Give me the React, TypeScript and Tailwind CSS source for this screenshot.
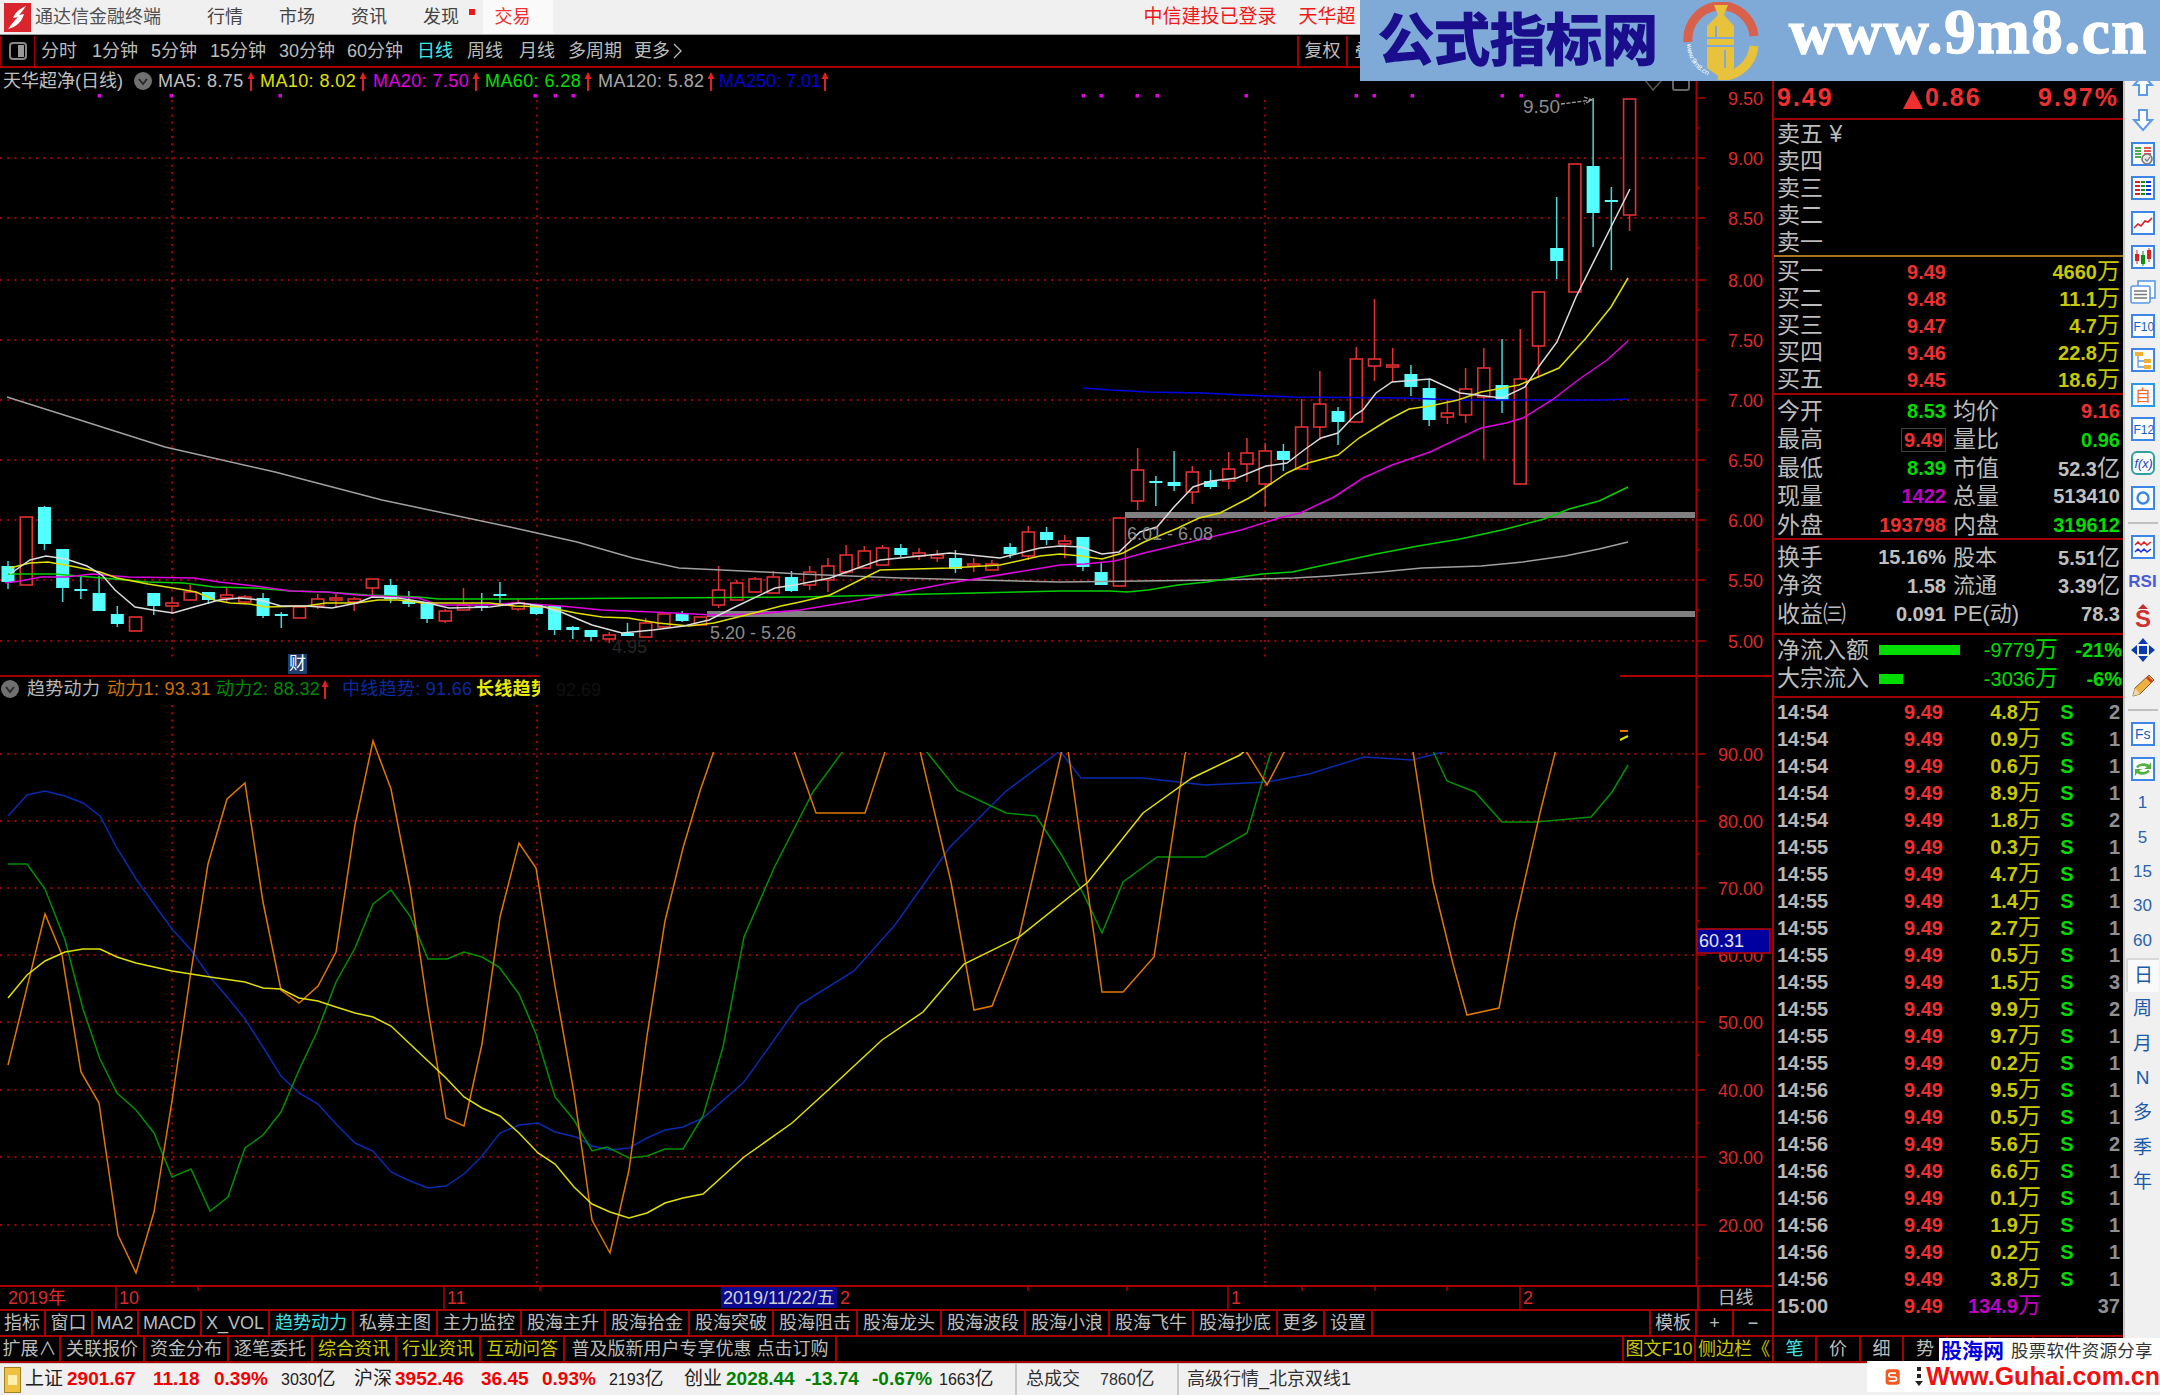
import type { ReactNode } from "react";

const X = (i: number) => 8 + 18.22 * i;

// c = cyan (down), r = red (up): [colour, high, bodyTop, bodyBottom, low]
const candles: [string, number, number, number, number][] = [
  ["c", 561, 566, 582, 589], ["r", 517, 517, 585, 585], ["c", 506, 507, 544, 550], ["c", 549, 549, 588, 602],
  ["c", 576, 589, 591, 599], ["c", 576, 593, 611, 611], ["c", 606, 614, 624, 627], ["r", 617, 617, 631, 631],
  ["c", 593, 593, 606, 615], ["r", 597, 603, 606, 614], ["r", 585, 592, 600, 600], ["c", 592, 592, 600, 604],
  ["r", 588, 595, 598, 603], ["r", 595, 597, 602, 603], ["c", 593, 598, 616, 618], ["c", 612, 614, 616, 628],
  ["r", 607, 607, 618, 618], ["r", 594, 599, 606, 609], ["r", 594, 598, 600, 608], ["r", 597, 599, 602, 611],
  ["r", 579, 579, 588, 595], ["c", 579, 585, 599, 603], ["c", 591, 600, 604, 607], ["c", 602, 602, 619, 623],
  ["r", 609, 611, 621, 623], ["r", 588, 605, 610, 610], ["c", 593, 606, 608, 611], ["c", 582, 594, 596, 606],
  ["r", 599, 603, 609, 611], ["c", 605, 605, 614, 615], ["c", 606, 606, 630, 635], ["c", 626, 627, 630, 639],
  ["c", 630, 630, 637, 641], ["r", 632, 635, 639, 643], ["c", 623, 633, 636, 636], ["r", 618, 623, 637, 637],
  ["r", 614, 614, 627, 627], ["c", 611, 613, 621, 622], ["r", 617, 617, 625, 625], ["r", 566, 590, 605, 608],
  ["r", 580, 583, 600, 600], ["r", 577, 579, 592, 592], ["r", 571, 577, 593, 593], ["c", 571, 577, 591, 592],
  ["r", 566, 572, 585, 590], ["r", 558, 566, 580, 592], ["r", 545, 555, 572, 574], ["r", 546, 551, 568, 568],
  ["r", 545, 548, 565, 565], ["c", 544, 548, 555, 557], ["r", 548, 553, 556, 560], ["r", 550, 555, 558, 562],
  ["c", 550, 558, 569, 573], ["r", 558, 564, 566, 572], ["r", 560, 564, 570, 570], ["c", 543, 547, 554, 558],
  ["r", 526, 532, 556, 560], ["c", 527, 532, 540, 545], ["r", 535, 541, 544, 558], ["c", 537, 537, 567, 571],
  ["c", 563, 572, 585, 585], ["r", 518, 518, 586, 586], ["r", 448, 470, 501, 510], ["c", 476, 481, 483, 506],
  ["c", 451, 482, 486, 491], ["r", 466, 472, 492, 504], ["c", 470, 481, 487, 489], ["r", 452, 469, 481, 489],
  ["r", 438, 453, 464, 482], ["r", 443, 451, 484, 507], ["c", 444, 451, 460, 471], ["r", 399, 427, 469, 469],
  ["r", 371, 404, 427, 440], ["c", 407, 411, 422, 445], ["r", 347, 359, 422, 422], ["r", 299, 359, 366, 381],
  ["r", 348, 365, 367, 382], ["c", 365, 374, 387, 396], ["c", 380, 388, 420, 426], ["r", 400, 413, 417, 424],
  ["r", 368, 389, 415, 423], ["r", 348, 368, 397, 459], ["c", 339, 385, 400, 413], ["r", 329, 379, 484, 484],
  ["r", 292, 292, 346, 378], ["c", 197, 248, 261, 279], ["r", 164, 164, 292, 292], ["c", 98, 166, 213, 247],
  ["c", 187, 200, 202, 270], ["r", 99, 99, 215, 231],
];

const ma5 = "10,574 30,560 46,556 66,559 87,566 102,575 115,590 135,607 153,610 173,613 194,607 219,600 240,598 260,600 281,606 306,606 332,608 357,603 372,597 398,598 423,602 449,608 490,607 520,603 541,606 561,612 592,625 622,633 653,630 684,626 709,620 735,607 775,588 800,584 830,578 880,560 950,553 1000,558 1040,548 1060,546 1081,547 1102,554 1119,552 1140,532 1157,527 1174,507 1193,487 1211,481 1237,478 1266,466 1287,463 1304,450 1321,438 1338,433 1355,415 1363,410 1376,393 1392,382 1430,379 1460,393 1502,398 1525,387 1540,365 1557,342 1576,297 1611,227 1630,189";
const ma10 = "10,568 30,563 48,562 76,567 100,572 117,578 148,584 179,589 196,592 214,600 230,603 250,604 265,607 306,606 326,603 357,603 378,600 398,600 423,603 459,603 490,603 515,606 546,607 576,613 602,617 628,618 658,623 689,626 714,623 750,614 781,606 800,602 830,595 880,570 950,568 1000,565 1040,556 1060,554 1081,556 1102,559 1123,553 1144,542 1178,528 1199,518 1220,513 1249,498 1266,487 1287,473 1308,463 1338,455 1359,438 1388,420 1409,409 1430,406 1458,400 1481,392 1519,385 1559,368 1586,338 1611,307 1628,278";
const ma20 = "5,583 20,581 41,577 66,577 92,574 128,577 194,578 219,582 255,586 291,591 326,592 357,595 418,598 439,605 485,605 515,603 561,606 602,610 653,612 714,615 755,614 800,610 860,600 950,583 1060,565 1085,564 1115,561 1144,553 1186,543 1211,537 1241,530 1279,518 1300,513 1334,497 1363,478 1392,465 1430,452 1481,428 1506,423 1523,418 1552,400 1578,380 1607,360 1628,341";
const ma60 = "8,574 54,574 102,578 148,582 184,583 214,587 255,588 291,591 326,592 367,595 418,597 439,599 510,599 800,597 1060,591 1110,591 1127,592 1148,590 1178,585 1207,582 1233,578 1262,574 1292,572 1334,563 1376,554 1418,546 1460,539 1502,530 1544,519 1569,509 1599,501 1628,487";
const ma120 = "7,397 83,421 165,447 275,472 382,500 510,527 577,542 633,558 679,568 765,572 800,574 900,578 1060,582 1220,580 1294,578 1329,576 1380,572 1422,568 1481,566 1523,562 1565,556 1599,549 1628,542";
const ma250 = "1083,388 1110,390 1148,392 1203,393 1241,395 1294,397 1403,398 1460,400 1603,400 1628,399";

const kOrange = "8,1065 45,914 62,955 81,1072 99,1103 118,1235 136,1273 154,1212 172,1101 190,978 208,864 227,799 245,783 263,902 281,990 299,1003 318,986 336,952 355,825 373,741 391,789 410,887 428,1009 446,1118 464,1126 482,1044 500,917 519,843 536,868 555,986 574,1093 592,1220 610,1253 629,1170 647,1036 665,921 683,848 700,791 716,745 770,700 792,745 816,813 865,813 884,755 900,700 920,751 951,882 974,1010 992,1006 1019,937 1062,750 1068,750 1102,992 1123,992 1154,957 1185,755 1200,700 1246,751 1267,785 1288,745 1330,700 1412,745 1433,882 1453,964 1467,1015 1499,1008 1515,923 1540,813 1557,745 1600,700";
const kGreen = "8,864 27,864 45,889 65,940 83,1009 100,1059 117,1093 136,1110 154,1133 172,1177 191,1169 210,1211 228,1197 245,1148 263,1135 281,1112 299,1070 317,1032 336,982 355,948 373,904 391,890 410,916 428,959 447,959 464,952 482,957 499,967 519,994 536,1034 555,1097 574,1120 592,1151 607,1147 629,1158 647,1156 665,1149 683,1149 703,1116 723,1047 744,937 774,868 813,792 843,751 900,700 926,751 957,790 1006,813 1036,816 1061,854 1084,895 1102,933 1123,882 1157,857 1205,857 1247,833 1270,755 1300,700 1433,751 1447,781 1475,792 1502,822 1536,822 1591,817 1612,792 1628,765";
const kBlue = "8,816 27,795 45,791 65,796 83,803 100,816 117,848 136,879 154,904 172,929 191,950 210,977 228,998 245,1019 263,1047 281,1076 299,1093 318,1104 336,1124 355,1143 373,1151 391,1172 410,1181 428,1188 446,1186 464,1174 482,1156 500,1133 519,1125 538,1123 555,1132 576,1137 592,1146 610,1150 629,1148 647,1138 665,1130 683,1127 703,1118 744,1082 799,1005 854,971 895,925 950,847 1005,792 1060,751 1081,778 1143,778 1205,785 1267,782 1309,774 1364,757 1412,760 1447,751";
const kYellow = "8,998 27,975 45,961 65,952 83,949 100,949 117,957 136,963 172,971 210,977 245,982 263,988 281,989 299,998 318,1001 336,1007 355,1013 373,1017 391,1026 410,1044 428,1061 446,1078 464,1097 482,1108 500,1116 519,1133 538,1153 555,1164 574,1187 592,1204 610,1212 629,1218 647,1213 665,1203 683,1198 703,1194 744,1157 792,1123 826,1092 882,1040 923,1012 964,964 1019,937 1088,882 1143,813 1192,778 1240,755 1300,700";

const priceTicks = [98, 158, 218, 280, 340, 400, 460, 520, 580, 641];
const priceLabels = ["9.50", "9.00", "8.50", "8.00", "7.50", "7.00", "6.50", "6.00", "5.50", "5.00"];
const magentaDots = [99, 171, 280, 535, 555, 573, 1083, 1101, 1137, 1157, 1246, 1356, 1374, 1412, 1502, 1521, 1557];
const kdTicks = [754, 821, 888, 955, 1022, 1090, 1157, 1225];
const kdLabels = ["90.00", "80.00", "70.00", "60.00", "50.00", "40.00", "30.00", "20.00"];

const UpArrow = () => (
  <svg width="8" height="19" viewBox="0 0 8 19" className="shrink-0">
    <path d="M4 0 L7.5 7 H5 V19 H3 V7 H0.5 Z" fill="#e02020" />
  </svg>
);

const DownCircle = () => (
  <svg width="18" height="18" viewBox="0 0 18 18" className="shrink-0">
    <circle cx="9" cy="9" r="9" fill="#707070" />
    <path d="M5 7 L9 12 L13 7" fill="none" stroke="#2a2a2a" strokeWidth="2" />
  </svg>
);

const PriceChart = () => (
  <div className="relative h-[609px]">
    <svg width="1772" height="609" viewBox="0 68 1772 609" className="block">
      {priceTicks.slice(1).map((y) => (
        <line key={y} x1="0" x2="1695" y1={y} y2={y} stroke="#a00000" strokeWidth="2" strokeDasharray="2 5.2" />
      ))}
      {[172, 537, 1265].map((x) => (
        <line key={x} x1={x} x2={x} y1="100" y2="660" stroke="#a00000" strokeWidth="2" strokeDasharray="2 5.2" />
      ))}
      {magentaDots.map((x) => (
        <rect key={x} x={x - 1.5} y="94" width="3.5" height="3.5" fill="#e000e0" />
      ))}
      <rect x="1125" y="512" width="570" height="6" fill="#808080" />
      <rect x="707" y="611" width="988" height="6" fill="#808080" />
      {candles.map(([c, hi, top, bot, lo], i) => {
        const cx = X(i);
        const col = c === "r" ? "#e43030" : "#45d8d8";
        return (
          <g key={i}>
            <line x1={cx} x2={cx} y1={hi} y2={lo} stroke={col} strokeWidth="1.5" />
            {c === "r" ? (
              <rect x={cx - 6} y={top} width="12" height={bot - top} fill="#000" stroke={col} strokeWidth="1.6" />
            ) : (
              <rect x={cx - 6.5} y={top} width="13" height={bot - top} fill="#54ffff" />
            )}
          </g>
        );
      })}
      <polyline points={ma120} fill="none" stroke="#a0a0a0" strokeWidth="1.5" />
      <polyline points={ma250} fill="none" stroke="#0000e0" strokeWidth="1.6" />
      <polyline points={ma60} fill="none" stroke="#00d000" strokeWidth="1.5" />
      <polyline points={ma20} fill="none" stroke="#e000e0" strokeWidth="1.5" />
      <polyline points={ma10} fill="none" stroke="#e0e000" strokeWidth="1.5" />
      <polyline points={ma5} fill="none" stroke="#dcdcdc" strokeWidth="1.5" />
      <text x="1127" y="540" fontSize="18" fill="#8c8c8c">6.01 - 6.08</text>
      <text x="710" y="639" fontSize="18" fill="#8c8c8c">5.20 - 5.26</text>
      <text x="612" y="653" fontSize="18" fill="#262626">4.95</text>
      <text x="1523" y="113" fontSize="19" fill="#8c8c8c">9.50</text>
      <path d="M1561 104 L1592 100 M1584 97 L1592 100 L1584 104" fill="none" stroke="#a0a0a0" strokeWidth="1.3" strokeDasharray="4 1.5" />
      <path d="M1645 80 L1653 90 L1662 80" fill="none" stroke="#555" strokeWidth="1.5" />
      <rect x="1673" y="76" width="16" height="14" rx="2" fill="none" stroke="#666" strokeWidth="2" />
      {/* price axis */}
      <line x1="1696.5" x2="1696.5" y1="68" y2="677" stroke="#a80000" strokeWidth="2" />
      {priceTicks.map((y, i) => (
        <g key={y}>
          <line x1="1696" x2="1705" y1={y} y2={y} stroke="#a80000" strokeWidth="1.5" />
          {i < 9 && <line x1="1696" x2="1700" y1={y + 30} y2={y + 30} stroke="#a80000" strokeWidth="1.5" />}
          <text x="1763" y={y + 7} fontSize="18" textAnchor="end" fill="#dc2a2a">{priceLabels[i]}</text>
        </g>
      ))}
      <line x1="0" x2="540" y1="676" y2="676" stroke="#a00000" strokeWidth="2" />
      <line x1="1620" x2="1772" y1="676" y2="676" stroke="#a80000" strokeWidth="2" />
    </svg>
    {/* legend sits over the chart */}
    <div className="absolute left-0 top-[1px] flex h-[24px] items-center text-[18px] tracking-[0.4px] whitespace-nowrap text-[#c0c0c0]">
      <span className="w-[134px] pl-[3px] tracking-normal">天华超净(日线)</span>
      <span className="w-[24px]"><DownCircle /></span>
      <span className="flex w-[102px] items-center gap-[3px]">MA5: 8.75<UpArrow /></span>
      <span className="flex w-[113px] items-center gap-[3px] text-[#e0e000]">MA10: 8.02<UpArrow /></span>
      <span className="flex w-[112px] items-center gap-[3px] text-[#e000e0]">MA20: 7.50<UpArrow /></span>
      <span className="flex w-[113px] items-center gap-[3px] text-[#00e000]">MA60: 6.28<UpArrow /></span>
      <span className="flex w-[121px] items-center gap-[3px] text-[#a8a8a8]">MA120: 5.82<UpArrow /></span>
      <span className="flex items-center text-[#0000d8] tracking-normal">MA250: 7.01<UpArrow /></span>
    </div>
    <div className="absolute left-[288px] top-[586px] flex h-[20px] w-[19px] items-center justify-center bg-[#1a3f70] text-[17px] text-white">财</div>
  </div>
);

const IndicatorChart = () => (
  <div className="relative h-[608px]">
    <svg width="1772" height="608" viewBox="0 677 1772 608" className="block">
      {kdTicks.map((y) => (
        <line key={y} x1="0" x2="1695" y1={y} y2={y} stroke="#a00000" strokeWidth="2" strokeDasharray="2 5.2" />
      ))}
      {[172, 537, 1265].map((x) => (
        <line key={x} x1={x} x2={x} y1="705" y2="1285" stroke="#a00000" strokeWidth="2" strokeDasharray="2 5.2" />
      ))}
      <polyline points={kBlue} fill="none" stroke="#0a2ab0" strokeWidth="1.5" />
      <polyline points={kGreen} fill="none" stroke="#009000" strokeWidth="1.5" />
      <polyline points={kOrange} fill="none" stroke="#e07800" strokeWidth="1.5" />
      <polyline points={kYellow} fill="none" stroke="#e0e000" strokeWidth="1.5" />
      <rect x="540" y="677" width="1080" height="75" fill="#000" />
      <path d="M1620 731 H1628" stroke="#e07800" strokeWidth="2" />
      <path d="M1620 740 L1628 736" stroke="#e0e000" strokeWidth="2" />
      <line x1="1696.5" x2="1696.5" y1="677" y2="1285" stroke="#a80000" strokeWidth="2" />
      {kdTicks.map((y, i) => (
        <g key={y}>
          <line x1="1696" x2="1705" y1={y} y2={y} stroke="#a80000" strokeWidth="1.5" />
          <line x1="1696" x2="1700" y1={y + 33} y2={y + 33} stroke="#a80000" strokeWidth="1.5" />
          <text x="1763" y={y + 7} fontSize="18" textAnchor="end" fill="#dc2a2a">{kdLabels[i]}</text>
        </g>
      ))}
      <rect x="1697" y="929" width="73" height="24" fill="#0000a0" stroke="#c00000" strokeWidth="1.5" />
      <text x="1699" y="947" fontSize="18" fill="#e8e8e8">60.31</text>
    </svg>
    <div className="absolute left-0 top-0 flex h-[24px] w-[540px] items-center overflow-hidden text-[18px] whitespace-nowrap tracking-[0.3px]">
      <span className="w-[27px] shrink-0 pl-[1px]"><DownCircle /></span>
      <span className="w-[80px] shrink-0 text-[#b8b8b8]">趋势动力</span>
      <span className="w-[109px] shrink-0 text-[#d07000]">动力1: 93.31</span>
      <span className="flex w-[126px] shrink-0 items-center gap-[1px] text-[#008a00]">动力2: 88.32<UpArrow /></span>
      <span className="w-[134px] shrink-0 text-[#0a2aa0]">中线趋势: 91.66</span>
      <span className="shrink-0 font-bold text-[#e8e800]">长线趋势</span>
    </div>
    <span className="absolute left-[556px] top-0 text-[18px] text-[#101010]">92.69</span>
  </div>
);

const DateRow = () => (
  <div className="flex h-[24px] border-t-2 border-[#a80000]">
    <svg width="1697" height="22" viewBox="0 1287 1697 22" className="block">
      {[116, 444, 1228, 1520].map((x) => (
        <line key={x} x1={x} x2={x} y1="1287" y2="1309" stroke="#a80000" strokeWidth="1.5" />
      ))}
      {[198, 540, 1028, 1127, 1302, 1375, 1447].map((x) => (
        <line key={x} x1={x} x2={x} y1="1287" y2="1291" stroke="#a80000" strokeWidth="1.5" />
      ))}
      <text x="8" y="1304" fontSize="18" fill="#dc2a2a">2019年</text>
      <text x="119" y="1304" fontSize="18" fill="#dc2a2a">10</text>
      <text x="447" y="1304" fontSize="18" fill="#dc2a2a">11</text>
      <rect x="721" y="1287" width="116" height="21" fill="#0a0a90" />
      <text x="723" y="1304" fontSize="18" fill="#d0d0d0">2019/11/22/五</text>
      <text x="840" y="1304" fontSize="18" fill="#dc2a2a">2</text>
      <text x="1231" y="1304" fontSize="18" fill="#dc2a2a">1</text>
      <text x="1523" y="1304" fontSize="18" fill="#dc2a2a">2</text>
    </svg>
    <div className="flex w-[75px] items-center justify-center border-l-2 border-[#a80000] text-[18px] text-[#b8b8b8]">日线</div>
  </div>
);

const Cell = ({ w, children, color = "text-[#bcbcbc]" }: { w: string; children: ReactNode; color?: string }) => (
  <div className={`flex shrink-0 items-center justify-center border-r-2 border-[#a80000] whitespace-nowrap ${w} ${color}`}>{children}</div>
);

const tabs1: [string, string, string?][] = [
  ["指标", "w-[46px]"], ["窗口", "w-[47px]"], ["MA2", "w-[46px]"], ["MACD", "w-[63px]"], ["X_VOL", "w-[68px]"],
  ["趋势动力", "w-[84px]", "text-[#40e0e0]"], ["私募主图", "w-[84px]"], ["主力监控", "w-[84px]"], ["股海主升", "w-[84px]"],
  ["股海拾金", "w-[84px]"], ["股海突破", "w-[84px]"], ["股海阻击", "w-[84px]"], ["股海龙头", "w-[84px]"],
  ["股海波段", "w-[84px]"], ["股海小浪", "w-[84px]"], ["股海飞牛", "w-[84px]"], ["股海抄底", "w-[84px]"],
  ["更多", "w-[47px]"], ["设置", "w-[48px]"],
];
const tabs2: [string, string, string?][] = [
  ["扩展∧", "w-[61px]"], ["关联报价", "w-[84px]"], ["资金分布", "w-[84px]"], ["逐笔委托", "w-[84px]"],
  ["综合资讯", "w-[84px]", "text-[#c8c800]"], ["行业资讯", "w-[84px]", "text-[#c8c800]"], ["互动问答", "w-[84px]", "text-[#c8c800]"],
  ["普及版新用户专享优惠 点击订购", "w-[272px]"],
];

const Tabs = () => (
  <>
    <div className="flex h-[26px] border-t-2 border-[#a80000] text-[18px]">
      {tabs1.map(([t, w, c]) => (
        <Cell key={t} w={w} color={c}>{t}</Cell>
      ))}
      <div className="flex-1 border-r-2 border-[#a80000]" />
      <Cell w="w-[46px]">模板</Cell>
      <Cell w="w-[37px]">+</Cell>
      <div className="flex w-[38px] items-center justify-center text-[#bcbcbc]">−</div>
    </div>
    <div className="flex h-[28px] border-t-2 border-b-2 border-[#a80000] text-[18px]">
      {tabs2.map(([t, w, c]) => (
        <Cell key={t} w={w} color={c}>{t}</Cell>
      ))}
      <div className="flex-1 border-r-2 border-[#a80000]" />
      <Cell w="w-[72px]" color="text-[#c8c800]">图文F10</Cell>
      <div className="flex w-[76px] items-center justify-center whitespace-nowrap text-[#c8c800]">侧边栏《</div>
    </div>
  </>
);

const RED = "text-[#f03030]";
const GREEN = "text-[#00dc00]";
const GRAY = "text-[#c0c0c0]";
const YEL = "text-[#c8c800]";

const sellRows = ["卖五 ¥", "卖四", "卖三", "卖二", "卖一"];
const buyRows: [string, string, string][] = [
  ["买一", "9.49", "4660"], ["买二", "9.48", "11.1"], ["买三", "9.47", "4.7"], ["买四", "9.46", "22.8"], ["买五", "9.45", "18.6"],
];
const statRows: [string, string, string, string, string, string][] = [
  ["今开", "8.53", GREEN, "均价", "9.16", RED],
  ["最高", "9.49", RED, "量比", "0.96", GREEN],
  ["最低", "8.39", GREEN, "市值", "52.3亿", GRAY],
  ["现量", "1422", "text-[#c000c0]", "总量", "513410", GRAY],
  ["外盘", "193798", RED, "内盘", "319612", GREEN],
];
const capRows: [string, string, string, string][] = [
  ["换手", "15.16%", "股本", "5.51亿"],
  ["净资", "1.58", "流通", "3.39亿"],
  ["收益㈢", "0.091", "PE(动)", "78.3"],
];
const ticks: [string, string, string][] = [
  ["14:54", "4.8", "2"], ["14:54", "0.9", "1"], ["14:54", "0.6", "1"], ["14:54", "8.9", "1"], ["14:54", "1.8", "2"],
  ["14:55", "0.3", "1"], ["14:55", "4.7", "1"], ["14:55", "1.4", "1"], ["14:55", "2.7", "1"], ["14:55", "0.5", "1"],
  ["14:55", "1.5", "3"], ["14:55", "9.9", "2"], ["14:55", "9.7", "1"], ["14:55", "0.2", "1"], ["14:56", "9.5", "1"],
  ["14:56", "0.5", "1"], ["14:56", "5.6", "2"], ["14:56", "6.6", "1"], ["14:56", "0.1", "1"], ["14:56", "1.9", "1"],
  ["14:56", "0.2", "1"], ["14:56", "3.8", "1"],
];

const Wan = () => <span className="text-[23px] font-normal leading-none">万</span>;

const QuotePanel = () => (
  <div className="flex w-[351px] flex-col border-l-2 border-[#a80000]">
    <div className="flex h-[52px] shrink-0 items-end border-b-2 border-[#a00000] pb-[8px] pl-[3px] text-[25px] font-bold leading-none tracking-[2px] text-[#f03030]">
      <span className="w-[126px]">9.49</span>
      <svg width="20" height="19" viewBox="0 0 20 19" className="mb-[1px] mr-[2px]"><path d="M10 0 L20 19 H0 Z" fill="#f03030" /></svg>
      <span className="w-[113px]">0.86</span>
      <span>9.97%</span>
    </div>
    <div className="h-[135px] shrink-0 pl-[3px] pt-[1px] text-[23px] text-[#bcbcbc]">
      {sellRows.map((s) => (
        <div key={s} className="flex h-[27px] items-center whitespace-pre">{s}</div>
      ))}
    </div>
    <div className="h-[2px] shrink-0 bg-[#a87818]" />
    <div className="h-[138px] shrink-0 border-b-2 border-[#a00000] pl-[3px] pt-[1px]">
      {buyRows.map(([l, p, v]) => (
        <div key={l} className="flex h-[27px] items-center">
          <span className="w-[60px] text-[23px] text-[#bcbcbc]">{l}</span>
          <span className={`w-[109px] text-right text-[20px] font-bold ${RED}`}>{p}</span>
          <span className={`flex-1 pr-[3px] text-right text-[20px] font-bold ${YEL}`}>{v}<Wan /></span>
        </div>
      ))}
    </div>
    <div className="h-[145px] shrink-0 border-b-2 border-[#a00000] pl-[3px] pt-[2px]">
      {statRows.map(([l, v, c, l2, v2, c2]) => (
        <div key={l} className="flex h-[28.4px] items-center">
          <span className="w-[60px] text-[23px] text-[#bcbcbc]">{l}</span>
          <span className={`w-[109px] text-right text-[20px] font-bold ${c}`}>
            {l === "最高" ? <span className="border border-[#404040] px-[2px]">{v}</span> : v}
          </span>
          <span className="ml-[7px] w-[60px] text-[23px] text-[#bcbcbc]">{l2}</span>
          <span className={`flex-1 pr-[3px] text-right text-[20px] font-bold ${c2}`}>
            {v2.endsWith("亿") ? <>{v2.slice(0, -1)}<span className="text-[23px] font-normal">亿</span></> : v2}
          </span>
        </div>
      ))}
    </div>
    <div className="h-[95px] shrink-0 border-b-2 border-[#a00000] pl-[3px] pt-[3px]">
      {capRows.map(([l, v, l2, v2]) => (
        <div key={l} className="flex h-[28.4px] items-center">
          <span className="w-[60px] whitespace-nowrap text-[23px] text-[#bcbcbc]">{l}</span>
          <span className={`w-[109px] text-right text-[20px] font-bold ${GRAY}`}>{v}</span>
          <span className="ml-[7px] w-[60px] whitespace-nowrap text-[22px] text-[#bcbcbc]">{l2}</span>
          <span className={`flex-1 pr-[3px] text-right text-[20px] font-bold ${GRAY}`}>
            {v2.endsWith("亿") ? <>{v2.slice(0, -1)}<span className="text-[23px] font-normal">亿</span></> : v2}
          </span>
        </div>
      ))}
    </div>
    <div className="h-[63px] shrink-0 border-b-2 border-[#a00000] pl-[3px] pt-[1px]">
      {[
        ["净流入额", "w-[81px]", "-9779", "-21%"],
        ["大宗流入", "w-[24px]", "-3036", "-6%"],
      ].map(([l, bar, v, p]) => (
        <div key={l} className="flex h-[28.4px] items-center whitespace-nowrap">
          <span className="w-[102px] text-[23px] text-[#bcbcbc]">{l}</span>
          <span className="w-[90px]"><span className={`block h-[10px] bg-[#00dc00] ${bar}`} /></span>
          <span className={`w-[89px] text-right text-[20px] ${GREEN}`}>{v}<Wan /></span>
          <span className={`flex-1 pr-[1px] text-right text-[20px] font-bold ${GREEN}`}>{p}</span>
        </div>
      ))}
    </div>
    <div className="flex-1 pl-[3px] text-[20px] font-bold">
      {ticks.map(([t, v, n], i) => (
        <div key={i} className="flex h-[27px] items-center">
          <span className="w-[110px] text-[#b8b8b8]">{t}</span>
          <span className={`w-[56px] text-right ${RED}`}>9.49</span>
          <span className={`w-[98px] text-right ${YEL}`}>{v}<Wan /></span>
          <span className={`w-[52px] text-center ${GREEN}`}>S</span>
          <span className="w-[27px] text-right text-[#909090]">{n}</span>
        </div>
      ))}
      <div className="flex h-[27px] items-center">
        <span className="w-[110px] text-[#b8b8b8]">15:00</span>
        <span className={`w-[56px] text-right ${RED}`}>9.49</span>
        <span className="w-[98px] text-right text-[#c000c0]">134.9<Wan /></span>
        <span className="w-[52px]" />
        <span className="w-[27px] text-right text-[#909090]">37</span>
      </div>
    </div>
    <div className="flex h-[28px] shrink-0 border-t-2 border-b-2 border-[#a80000] text-[18px] text-[#bcbcbc]">
      <Cell w="w-[43px]" color="text-[#40e0e0]">笔</Cell>
      <Cell w="w-[44px]">价</Cell>
      <Cell w="w-[43px]">细</Cell>
      <Cell w="w-[44px]">势</Cell>
      <Cell w="w-[43px]">联</Cell>
      <Cell w="w-[43px]">值</Cell>
      <Cell w="w-[44px]">主</Cell>
      <div className="flex flex-1 items-center justify-center">筹</div>
    </div>
  </div>
);

const Box = ({ children, stroke = "#3b86e6", rx = 0 }: { children?: ReactNode; stroke?: string; rx?: number }) => (
  <svg width="24" height="24" viewBox="0 0 24 24">
    <rect x="1" y="1" width="22" height="22" rx={rx} fill="#fbfdff" stroke={stroke} strokeWidth="2" />
    {children}
  </svg>
);

const sideIcons: ReactNode[] = [
  <svg width="24" height="24" viewBox="0 0 24 24"><path d="M12 2 L21 12 H16 V22 H8 V12 H3 Z" fill="#fff" stroke="#5a9ae8" strokeWidth="2" /></svg>,
  <svg width="24" height="24" viewBox="0 0 24 24"><path d="M12 22 L21 12 H16 V2 H8 V12 H3 Z" fill="#fff" stroke="#5a9ae8" strokeWidth="2" /></svg>,
  <Box>
    <path d="M4 6 H10 M4 9 H10 M4 12 H10 M4 15 H10" stroke="#109010" strokeWidth="1.6" />
    <path d="M13 6 H20 M13 9 H20 M13 12 H20" stroke="#e02020" strokeWidth="1.6" />
    <circle cx="16" cy="17" r="5" fill="#e8e8e8" stroke="#777" strokeWidth="1.6" />
    <path d="M14 17 L16 19 L19 15" fill="none" stroke="#777" strokeWidth="1.2" />
  </Box>,
  <Box>
    <path d="M4 6 H9 M4 10 H9 M4 14 H9 M4 18 H9" stroke="#e02020" strokeWidth="1.8" />
    <path d="M10 6 H14 M10 10 H14 M10 14 H14 M10 18 H14" stroke="#109010" strokeWidth="1.8" />
    <path d="M15 6 H20 M15 10 H20 M15 14 H20 M15 18 H20" stroke="#1030e0" strokeWidth="1.8" />
  </Box>,
  <Box><path d="M3 17 L7 13 L10 15 L14 10 L17 11 L21 7" fill="none" stroke="#e02020" strokeWidth="1.6" /></Box>,
  <Box>
    <path d="M6 5 V19" stroke="#e02020" strokeWidth="1" />
    <rect x="4" y="9" width="4" height="7" fill="#e02020" />
    <path d="M12 6 V21" stroke="#109010" strokeWidth="1" />
    <rect x="10" y="10" width="4" height="9" fill="#109010" />
    <path d="M18 3 V17" stroke="#e02020" strokeWidth="1" />
    <rect x="16" y="5" width="4" height="9" fill="#e02020" />
  </Box>,
  <svg width="26" height="24" viewBox="0 0 26 24">
    <rect x="8" y="1" width="17" height="17" fill="#fff" stroke="#5a9ae8" strokeWidth="1.6" />
    <rect x="1" y="6" width="19" height="17" rx="2" fill="#fff" stroke="#5a9ae8" strokeWidth="1.6" />
    <path d="M4 11 H17 M4 14.5 H17 M4 18 H17" stroke="#777" strokeWidth="1.6" />
  </svg>,
  <Box><text x="2.5" y="17" fontSize="12" fill="#1a5fc0">F10</text></Box>,
  <Box>
    <rect x="4" y="4" width="8" height="4" fill="#f0b030" />
    <rect x="13" y="11" width="7" height="4" fill="#f0b030" />
    <rect x="13" y="17" width="7" height="4" fill="#f0b030" />
    <path d="M7 8 V19 H13 M7 13 H13" fill="none" stroke="#5a9ae8" strokeWidth="1.3" />
  </Box>,
  <Box stroke="#2a9ae8"><text x="4" y="18" fontSize="16" fill="#f07020">自</text></Box>,
  <Box><text x="2.5" y="17" fontSize="12" fill="#1a5fc0">F12</text></Box>,
  <Box stroke="#30a0a0" rx={5}><text x="3.5" y="17" fontSize="12.5" fontStyle="italic" fill="#1a40c0">f(x)</text></Box>,
  <Box><circle cx="12" cy="12" r="5.5" fill="none" stroke="#3b86e6" strokeWidth="2.4" /></Box>,
];
const sideIcons2: ReactNode[] = [
  <Box>
    <path d="M4 10 L7 7 L10 10 L13 7 L16 10 L20 7" fill="none" stroke="#e02020" strokeWidth="1.5" />
    <path d="M4 17 L7 14 L10 17 L13 14 L16 17 L20 14" fill="none" stroke="#2030e0" strokeWidth="1.5" />
  </Box>,
  <span className="text-[17px] font-bold text-[#4a5ad8]">RSI</span>,
  <svg width="24" height="26" viewBox="0 0 24 26">
    <path d="M12 1 L17 6 H7 Z" fill="#c03030" />
    <text x="12" y="24" fontSize="24" fontWeight="bold" textAnchor="middle" fill="#d03030">S</text>
  </svg>,
  <svg width="26" height="26" viewBox="0 0 26 26" fill="#0a3ab0">
    <path d="M13 1 L18 7 H8 Z M13 25 L18 19 H8 Z M1 13 L7 8 V18 Z M25 13 L19 8 V18 Z" />
    <rect x="9" y="9" width="8" height="8" />
  </svg>,
  <svg width="26" height="26" viewBox="0 0 26 26">
    <path d="M3 24 L5 16 L19 3 L24 8 L10 22 Z" fill="#f0b040" stroke="#806020" strokeWidth="1" />
    <path d="M3 24 L5 16 L10 22 Z" fill="#e8d8b0" />
    <path d="M17 5 L22 10" stroke="#d04030" strokeWidth="3" />
  </svg>,
];
const sideText = ["1", "5", "15", "30", "60"];
const sideCjk = ["周", "月", "N", "多", "季", "年"];

const Sidebar = () => (
  <div className="flex w-[37px] flex-col items-center border-l-2 border-[#c8c8c8] bg-[#f0f0f0] pt-[33px]">
    {sideIcons.map((ic, i) => (
      <div key={i} className="flex h-[34.4px] items-center justify-center">{ic}</div>
    ))}
    <div className="flex h-[15px] w-[30px] items-center"><div className="h-[2px] w-full bg-[#c0c0c0]" /></div>
    {sideIcons2.map((ic, i) => (
      <div key={i} className="flex h-[34.4px] items-center justify-center">{ic}</div>
    ))}
    <div className="flex h-[15px] w-[30px] items-center"><div className="h-[2px] w-full bg-[#c0c0c0]" /></div>
    <div className="flex h-[34.4px] items-center">
      <Box><text x="4" y="17" fontSize="14" fill="#1a5fc0">Fs</text></Box>
    </div>
    <div className="flex h-[34.4px] items-center">
      <Box><path d="M5 10 A8 6 0 0 1 18 8 L20 5 V12 H13 L16 10 A6 4 0 0 0 7 11 Z M19 14 A8 6 0 0 1 6 16 L4 19 V12 H11 L8 14 A6 4 0 0 0 17 13 Z" fill="#50b040" /></Box>
    </div>
    {sideText.map((t) => (
      <div key={t} className="flex h-[34.4px] items-center text-[17px] text-[#2a62a8]">{t}</div>
    ))}
    <div className="flex h-[34.4px] w-[33px] items-center justify-center border-t-2 border-l-2 border-[#d8d8d8] bg-[#fafafa] text-[19px] text-[#1a5aa8]">日</div>
    {sideCjk.map((t) => (
      <div key={t} className="flex h-[34.6px] items-center text-[19px] text-[#1a5aa8]">{t}</div>
    ))}
  </div>
);

const Toolbar = () => {
  const items: [string, string, string?][] = [
    ["分时", "w-[51px]"], ["1分钟", "w-[59px]"], ["5分钟", "w-[59px]"], ["15分钟", "w-[69px]"], ["30分钟", "w-[68px]"],
    ["60分钟", "w-[70px]"], ["日线", "w-[50px]", "text-[#40e8e8]"], ["周线", "w-[52px]"], ["月线", "w-[49px]"], ["多周期", "w-[66px]"],
  ];
  return (
    <div className="flex h-[33px] shrink-0 items-center border-b-2 border-[#a80000] pt-[1px] text-[18px] text-[#bcbcbc]">
      <div className="flex h-full w-[35px] items-center justify-center border-x border-[#a00000]">
        <svg width="18" height="18" viewBox="0 0 18 18">
          <rect x="1" y="1" width="16" height="16" rx="3" fill="none" stroke="#888" strokeWidth="2" />
          <rect x="9" y="3" width="6" height="12" fill="#999" />
        </svg>
      </div>
      <div className="flex pl-[6px]">
        {items.map(([t, w, c]) => (
          <span key={t} className={`whitespace-nowrap ${w} ${c ?? ""}`}>{t}</span>
        ))}
        <span className="flex items-center gap-[3px]">
          更多
          <svg width="9" height="16" viewBox="0 0 9 16"><path d="M1 1 L8 8 L1 15" fill="none" stroke="#bcbcbc" strokeWidth="1.3" /></svg>
        </span>
      </div>
      <div className="ml-[615px] flex h-full w-[51px] items-center justify-center border-x-2 border-[#a00000]">复权</div>
      <div className="flex h-full w-[51px] items-center justify-center border-r-2 border-[#a00000]">叠加</div>
    </div>
  );
};

const TitleBar = () => (
  <div className="flex h-[35px] shrink-0 items-center border-b border-[#a0a0a0] bg-[#f0f0f0] text-[18px] text-[#444]">
    <svg width="27" height="29" viewBox="0 0 27 29" className="ml-[4px]">
      <rect width="27" height="29" fill="#d8262c" />
      <path d="M22 3 C15 6 11 10 9 15 L14 14 C10 18 7 22 4 26 C12 24 18 19 20 11 L15 12 C18 9 20 6 22 3 Z" fill="#fff" />
    </svg>
    <span className="ml-[4px] w-[172px] text-[#505050]">通达信金融终端</span>
    <span className="w-[72px]">行情</span>
    <span className="w-[72px]">市场</span>
    <span className="w-[72px]">资讯</span>
    <span className="w-[46px]">发现</span>
    <span className="mb-[10px] h-[6px] w-[6px] bg-[#e81818]" />
    <span className="ml-[7.5px] flex h-full w-[70px] items-center bg-[#fafafa] pl-[12px] text-[#f03030]">交易</span>
    <span className="ml-[591px] w-[155px] text-[19px] text-[#f01818]">中信建投已登录</span>
    <span className="text-[19px] text-[#f01818]">天华超</span>
  </div>
);

const statusItems: [string, string, string?][] = [
  ["2901.67", "w-[86px]", "r"], ["11.18", "w-[61px]", "r"], ["0.39%", "w-[67px]", "r"], ["3030", "w-[73px]"],
];
const statusItems2: [string, string, string?][] = [
  ["3952.46", "w-[86px]", "r"], ["36.45", "w-[61px]", "r"], ["0.93%", "w-[67px]", "r"], ["2193", "w-[75px]"],
];
const statusItems3: [string, string, string?][] = [
  ["2028.44", "w-[79px]", "g"], ["-13.74", "w-[67px]", "g"], ["-0.67%", "w-[67px]", "g"], ["1663", "w-[76px]"],
];

const StatusGroup = ({ name, w, items }: { name: string; w: string; items: [string, string, string?][] }) => (
  <>
    <span className={`text-[19px] text-[#202020] ${w}`}>{name}</span>
    {items.map(([t, iw, c]) => (
      <span
        key={t}
        className={`${iw} ${c === "r" ? "text-[19px] font-bold text-[#f00000]" : c === "g" ? "text-[19px] font-bold text-[#008000]" : "text-[16px] text-[#202020]"}`}
      >
        {t}
        {!c && <span className="text-[19px]">亿</span>}
      </span>
    ))}
  </>
);

const StatusBar = () => (
  <div className="flex h-[32px] items-center border-t border-[#d0d0d0] bg-[#f0f0f0] whitespace-nowrap">
    <span className="ml-[4px] mr-[4px] flex h-[26px] w-[17px] items-center justify-center border border-[#a08020] bg-[#f0c040]">
      <span className="h-[10px] w-[9px] bg-[#fff0b0]" />
    </span>
    <StatusGroup name="上证" w="w-[42px]" items={statusItems} />
    <StatusGroup name="沪深" w="w-[41px]" items={statusItems2} />
    <StatusGroup name="创业" w="w-[42px]" items={statusItems3} />
    <span className="flex h-full w-[162px] items-center border-l-2 border-[#c8c8c8] pl-[9px] text-[18px] text-[#303030]">
      <span className="w-[74px]">总成交</span>
      <span className="text-[16px]">7860<span className="text-[19px]">亿</span></span>
    </span>
    <span className="flex h-full items-center border-l-2 border-[#c8c8c8] pl-[8px] text-[18px] text-[#303030]">高级行情_北京双线1</span>
  </div>
);

const Banner = () => (
  <div className="absolute left-[1360px] top-0 flex h-[81px] w-[800px] items-center overflow-hidden bg-[#7fa9d6] pl-[18px]">
    <span className="w-[282px] whitespace-nowrap text-[56px] font-bold leading-none text-[#1a0e8c] [-webkit-text-stroke:1.5px_#1a0e8c]">公式指标网</span>
    <svg width="78" height="78" viewBox="0 0 78 78" className="ml-[22px]">
      <path d="M6 40 A33 33 0 0 1 72 34" fill="none" stroke="#d9604a" strokeWidth="9" />
      <path d="M72 44 A33 33 0 0 1 36 74" fill="none" stroke="#e8c23a" strokeWidth="9" />
      <path d="M32 3 H46 L42 13 L52 24 V66 L39 76 L25 66 V24 L36 13 Z" fill="#e8c23a" />
      <path d="M25 36 H52 M25 44 H52 M34 24 V36 M43 48 V66" stroke="#7fa9d6" strokeWidth="2" />
      <path id="coinText" d="M5 42 A34 34 0 0 0 36 76" fill="none" />
      <text fontSize="7" fill="#fff"><textPath href="#coinText">www.9m8.cn</textPath></text>
    </svg>
    <span className="ml-[29px] -mt-[16px] whitespace-nowrap text-[63px] font-bold leading-none tracking-[1.6px] text-white [-webkit-text-stroke:1.4px_#fff] [font-family:'Liberation_Serif',serif]">www.9m8.cn</span>
  </div>
);

const Watermark = () => (
  <>
    <div className="absolute left-[1939px] top-[1338px] flex h-[23px] w-[221px] items-start bg-white pl-[2px]">
      <span className="text-[21px] font-bold leading-[26px] text-[#0000e0]">股海网</span>
      <span className="ml-[7px] text-[17.5px] leading-[26px] tracking-[0.2px] text-[#333]">股票软件资源分享</span>
    </div>
    <div className="absolute left-[1867px] top-[1361px] flex h-[31px] w-[293px] items-center bg-white pl-[18px]">
      <svg width="24" height="26" viewBox="0 0 24 26">
        <rect x="1" y="1" width="22" height="24" rx="5" fill="#f05a22" />
        <path d="M17 7 H9 Q6 7 6 10 Q6 13 9 13 H15 Q18 13 18 16 Q18 19 15 19 H6" fill="none" stroke="#fff" strokeWidth="2.6" />
      </svg>
      <span className="ml-[12px] flex w-[20px] flex-col items-center gap-[3px]">
        <span className="h-[4px] w-[4px] bg-[#222]" />
        <span className="h-[4px] w-[4px] bg-[#222]" />
        <span className="h-0 w-0 border-x-[4px] border-t-[5px] border-x-transparent border-t-[#222]" />
      </span>
      <span className="ml-[1px] whitespace-nowrap text-[25px] font-bold leading-none text-[#f01010]">Www.Guhai.com.cn</span>
    </div>
  </>
);

export default function App() {
  return (
    <div className="relative flex h-[1395px] w-[2160px] flex-col overflow-hidden bg-black [font-family:'Liberation_Sans','Noto_Sans_CJK_SC',sans-serif]">
      <TitleBar />
      <div className="flex h-[1328px] shrink-0">
        <div className="flex w-[2123px] flex-col">
          <Toolbar />
          <div className="flex flex-1">
            <div className="flex w-[1772px] flex-col">
              <PriceChart />
              <IndicatorChart />
              <DateRow />
              <Tabs />
            </div>
            <QuotePanel />
          </div>
        </div>
        <Sidebar />
      </div>
      <StatusBar />
      <Banner />
      <Watermark />
    </div>
  );
}
